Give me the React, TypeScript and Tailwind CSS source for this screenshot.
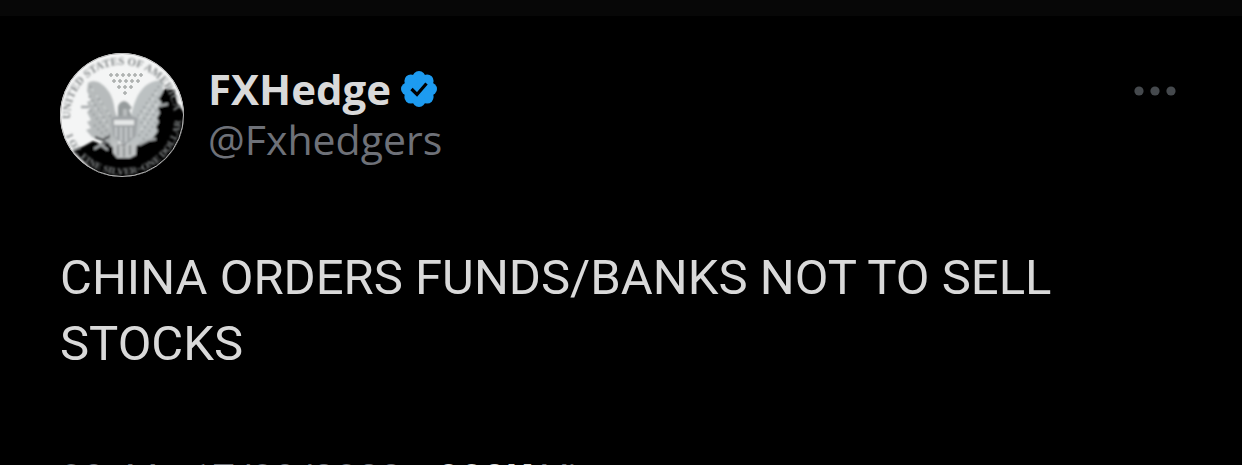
const tweet = {
	name: "FXHedge",
	handle: "@Fxhedgers",
	text: "CHINA ORDERS FUNDS/BANKS NOT TO SELL STOCKS",
	time: "08:44",
	date: "17/08/2023",
	views: "908K",
}

export default function App() {
	return (
		<main className="h-screen overflow-hidden bg-black font-['Roboto',sans-serif] text-[#d9d9d9]">
			<div className="h-4 bg-[#070707]" />
			<article className="pl-15 pr-16 pt-[37px]">
				<header className="flex items-start">
					<Avatar />
					<div className="ml-6 mt-[11px] flex flex-col font-['Open_Sans',sans-serif] leading-[50px]">
						<div className="flex items-center gap-2.5">
							<h1 className="text-[42px] font-bold">{tweet.name}</h1>
							<VerifiedBadge />
						</div>
						<a href="#profile" className="text-[41px] text-[#6e7178]">{tweet.handle}</a>
					</div>
					<button type="button" aria-label="More" className="ml-auto mt-8">
						<svg viewBox="0 0 44 12" className="h-3 w-11 fill-[#45494d]">
							<circle cx="5" cy="6" r="4.6" />
							<circle cx="21" cy="6" r="4.6" />
							<circle cx="37" cy="6" r="4.6" />
						</svg>
					</button>
				</header>
				<p className="mt-17 text-[49px] leading-[66px]">{tweet.text}</p>
				<footer className="mt-[78px] flex gap-3 whitespace-nowrap text-[40px] leading-[50px] text-[#6e7178]">
					<time>{tweet.time} · {tweet.date}</time>
					<span>·</span>
					<span><strong className="font-bold text-[#d9d9d9]">{tweet.views}</strong> Views</span>
				</footer>
			</article>
		</main>
	)
}

function VerifiedBadge() {
	return (
		<svg viewBox="0 0 36 36" className="size-9" role="img" aria-label="Verified">
			<g fill="#1d9bf0">
				<circle cx="18" cy="18" r="15" />
				<circle cx="18" cy="6.5" r="6.5" />
				<circle cx="26.1" cy="9.9" r="6.5" />
				<circle cx="29.5" cy="18" r="6.5" />
				<circle cx="26.1" cy="26.1" r="6.5" />
				<circle cx="18" cy="29.5" r="6.5" />
				<circle cx="9.9" cy="26.1" r="6.5" />
				<circle cx="6.5" cy="18" r="6.5" />
				<circle cx="9.9" cy="9.9" r="6.5" />
			</g>
			<path d="M10.5 18l5.5 5.5L25.5 12.5" fill="none" stroke="#000" strokeWidth="3.2" />
		</svg>
	)
}

function Avatar() {
	const starRows = [
		{ y: 22, xs: [51, 57, 63, 69, 75, 81] },
		{ y: 28, xs: [54, 60, 66, 72, 78] },
		{ y: 34, xs: [59, 65, 71] },
		{ y: 40, xs: [65] },
	]

	return (
		<svg viewBox="0 0 124 124" className="size-31 shrink-0" role="img" aria-label="Silver eagle coin">
			<defs>
				<clipPath id="coin"><circle cx="62" cy="62" r="62" /></clipPath>
				<filter id="soft"><feGaussianBlur stdDeviation="0.8" /></filter>
				<path id="rimTop" d="M12 78A52 52 0 1 1 113 74" />
				<path id="rimBottom" d="M3 70A59.5 59.5 0 0 0 121 70" />
			</defs>
			<g clipPath="url(#coin)">
				<rect width="124" height="124" fill="#f4f5f5" />
				<g filter="url(#soft)">
					<path d="M101 39l4-3 9 1 3 13 9 12v64H42L13 98l11-5 9-5 10 4 8-3 22 5 17-7 6-12-1-18z" fill="#050505" />
					<path d="M28 30c7-5 16 1 21 9 4 6 5 13 6 19l4 12-1 26-8-3-10-6-8-3-6-7 5-2-4-6 4-2-4-8 3-3-3-7 4-2-4-9z" fill="#b7bbbc" />
					<path d="M103 28c-9-2-18 4-22 10-5 6-7 14-9 21l-3 15-1 22 12-5 13-6 5-7-2-4 3-5-2-4 3-5-2-5 4-5-3-4 4-7z" fill="#bcc1c2" />
					<path d="M30 33l21 31M29 43l21 31M30 57l20 25M34 72l16 16M99 33L78 63M99 44L79 73M97 57L78 84M96 69L80 91" stroke="#959a9b" strokeWidth="2" strokeDasharray="2 3" />
					<path d="M32 36l17 25M31 49l18 25M97 39L80 65M97 51L80 79" stroke="#d8dcdc" strokeWidth="1.5" strokeDasharray="3 4" />
					<path d="M58 66V54c1-5 6-8 10-4l4 5-3 2 4 9z" fill="#969b9c" />
					<path d="M63 56h4v8h-4z" fill="#b9bdbe" />
					<path d="M51 65c7-3 21-3 27 0l-2 18-11 10-12-10z" fill="#a2a6a8" />
					<path d="M54 67h20v5H54z" fill="#e5e7e7" />
					<path d="M56 74v10M61 74v14M66 74v15M71 74v11" stroke="#c4c8c9" strokeWidth="2" />
					<path d="M52 88l12 5 13-5-1 14-6 3H57l-4-5z" fill="#bfc2c3" />
					<path d="M58 92v11M64 94v10M70 92v10" stroke="#8d9192" strokeWidth="2" />
					<path d="M35 84l8 3 7-4M39 93l6-4 5 3" stroke="#333637" strokeWidth="2" fill="none" />
					<path d="M34 96l7-4 7 5M79 92l10-5 7-1M21 54h8M99 53l9-2" stroke="#a5a9aa" strokeWidth="2.5" fill="none" />
				</g>
				{starRows.map((row) => row.xs.map((x) => (
					<path key={`${x}-${row.y}`} d={`M${x - 2} ${row.y}h4M${x} ${row.y - 2}v4`} stroke="#aaaead" strokeWidth="1.5" />
				)))}
				<g className="font-['Liberation_Serif',serif] text-[11px] font-bold" fill="#85898a" filter="url(#soft)">
					<text><textPath href="#rimTop" startOffset="12">UNITED STATES OF AMERICA</textPath></text>
					<text className="text-[10px]"><textPath href="#rimBottom" startOffset="12">1 OZ. FINE SILVER~ONE DOLLAR</textPath></text>
				</g>
			</g>
			<circle cx="62" cy="62" r="61.5" fill="none" stroke="#b8b8b8" strokeWidth="1" />
		</svg>
	)
}
